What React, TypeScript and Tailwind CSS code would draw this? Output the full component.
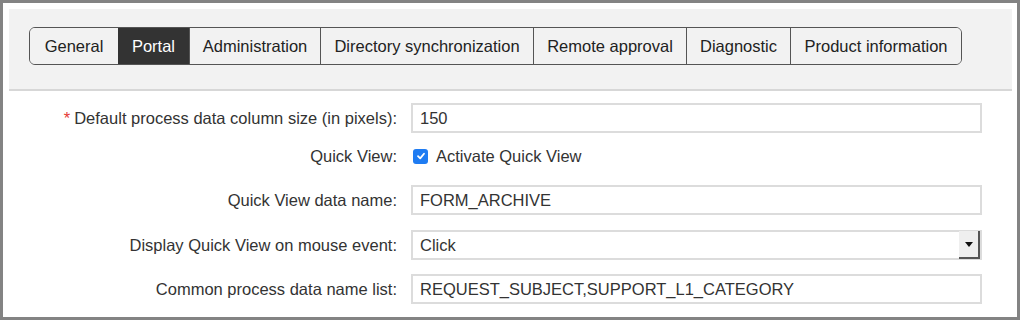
const tabs = [
  "General",
  "Portal",
  "Administration",
  "Directory synchronization",
  "Remote approval",
  "Diagnostic",
  "Product information",
];
const widths = ["w-[88px]", "w-[71px]", "w-[131px]", "w-[213px]", "w-[153px]", "w-[104px]", "w-[171px]"];

function Field({ value }: { value: string }) {
  return (
    <div className="h-[30px] w-[571px] border-2 border-[#dcdcdc] bg-white pl-[7px] flex items-center">
      {value}
    </div>
  );
}

function Label({ children }: { children: React.ReactNode }) {
  return <div className="w-[388px] text-right">{children}</div>;
}

export default function App() {
  return (
    <div className="w-[1021px] h-[323px] bg-white text-[#333] text-[16.5px]" style={{ fontFamily: '"Liberation Sans", Arial, sans-serif' }}>
      <div className="w-[1020px] h-[320px] border-[3px] border-[#838383] bg-white px-[6px] pt-[6px]">
        <div className="h-[82px] w-[1003px] bg-[#f2f2f2] border-b-2 border-[#d7d7d7] pl-[20px] pt-[18px]">
          <div className="flex h-[38px] w-fit border border-[#555] rounded-[6px] overflow-hidden">
            {tabs.map((t, i) => (
              <div
                key={t}
                className={`${widths[i]} flex items-center justify-center ${i > 1 ? "border-l border-[#555]" : ""} ${
                  t === "Portal" ? "bg-[#333] text-white" : "bg-[#f2f2f2] text-[#222]"
                }`}
              >
                {t}
              </div>
            ))}
          </div>
        </div>
        <div className="flex flex-col pt-[12px]">
          <div className="flex items-center gap-[14px]">
            <Label>
              <span className="text-[#e53935] mr-[4px]">*</span>Default process data column size (in pixels):
            </Label>
            <Field value="150" />
          </div>
          <div className="flex items-center gap-[14px] mt-[12px] h-[22px]">
            <Label>Quick View:</Label>
            <div className="flex items-center gap-[8px] pl-[2px]">
              <div className="w-[15px] h-[15px] rounded-[3px] bg-[#1f7cf2] flex items-center justify-center">
                <svg width="10" height="10" viewBox="0 0 10 10">
                  <path d="M2 5.2 L4.2 7.4 L8 2.8" stroke="white" strokeWidth="1.8" fill="none" strokeLinecap="round" strokeLinejoin="round" />
                </svg>
              </div>
              <span>Activate Quick View</span>
            </div>
          </div>
          <div className="flex items-center gap-[14px] mt-[18px]">
            <Label>Quick View data name:</Label>
            <Field value="FORM_ARCHIVE" />
          </div>
          <div className="flex items-center gap-[14px] mt-[15px]">
            <Label>Display Quick View on mouse event:</Label>
            <div className="h-[30px] w-[571px] border-2 border-[#dcdcdc] bg-white pl-[7px] flex items-center justify-between">
              <span>Click</span>
              <div className="h-[28px] w-[21px] bg-[#efefef] border-r-2 border-b-2 border-[#555] flex items-center justify-center">
                <svg width="8" height="5" viewBox="0 0 8 5">
                  <path d="M0 0 H8 L4 5 Z" fill="#111" />
                </svg>
              </div>
            </div>
          </div>
          <div className="flex items-center gap-[14px] mt-[14px]">
            <Label>Common process data name list:</Label>
            <Field value="REQUEST_SUBJECT,SUPPORT_L1_CATEGORY" />
          </div>
        </div>
      </div>
    </div>
  );
}
